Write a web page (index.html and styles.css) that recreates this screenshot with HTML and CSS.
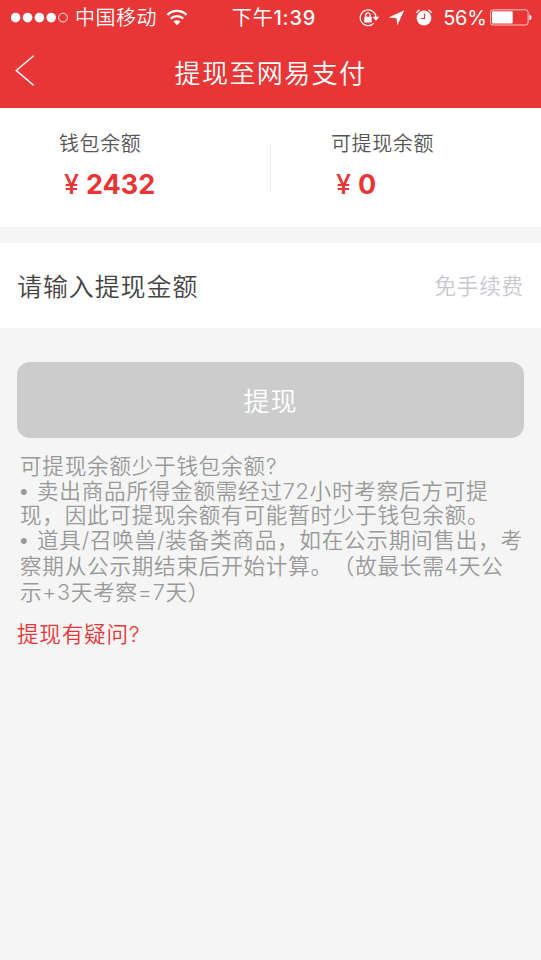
FILE: index.html
```html
<!DOCTYPE html>
<html lang="zh-CN">
<head>
<meta charset="utf-8">
<meta name="viewport" content="width=device-width, initial-scale=1">
<title>提现至网易支付</title>
<link rel="stylesheet" href="styles.css">
</head>
<body>
<header class="header">
  <div class="status">
    <div class="status-left">
      <svg class="signal" width="58" height="12" viewBox="0 0 58 12"><g fill="#fff"><circle cx="4.6" cy="5.6" r="4.8"/><circle cx="16.6" cy="5.6" r="4.8"/><circle cx="28.4" cy="5.6" r="4.8"/><circle cx="40.2" cy="5.6" r="4.8"/></g><circle cx="52" cy="5.6" r="4.4" fill="none" stroke="#fff" stroke-width=".9"/></svg>
      <span class="carrier">中国移动</span>
      <svg class="wifi" width="22" height="17" viewBox="0 0 22 17"><g fill="none" stroke="#fff" stroke-width="2.4"><path d="M1.4 5.8a13.6 13.6 0 0 1 19.2 0"/><path d="M4.8 9.7a8.8 8.8 0 0 1 12.4 0"/></g><path d="M11 16.2 7.5 12.6a5 5 0 0 1 7 0z" fill="#fff"/></svg>
    </div>
    <span class="time"><span class="period">下午</span>1:39</span>
    <div class="status-right">
      <svg class="lock" width="21" height="18" viewBox="0 0 21 18"><path d="M14.9 14.1A7.9 7.9 0 1 1 17 8.2" fill="none" stroke="#fff" stroke-width="1.2"/><path d="M13.7 7.8h6.6L17 11.8z" fill="#fff"/><rect x="5.3" y="7.8" width="7.4" height="5.6" rx=".5" fill="#fff"/><path d="M6.8 8V6a2.2 2.2 0 0 1 4.4 0v2" fill="none" stroke="#fff" stroke-width="1.2"/></svg>
      <svg class="arrow" width="17" height="16" viewBox="0 0 17 16"><path d="M16.3.3 9.2 15.6 8.5 8.3.7 7.6z" fill="#fff"/></svg>
      <svg class="alarm" width="18" height="18" viewBox="0 0 18 18"><circle cx="9" cy="9" r="7.4" fill="#fff"/><path d="M1.2 4A9.6 9.6 0 0 1 4.6.9M16.8 4A9.6 9.6 0 0 0 13.4.9" fill="none" stroke="#fff" stroke-width="1.3"/><path d="M9.6 4.4v5.1H5.6" fill="none" stroke="#e83536" stroke-width="1.1"/></svg>
      <span class="percent">56%</span>
      <svg class="battery" width="42" height="17" viewBox="0 0 42 17"><rect x=".5" y=".8" width="37.6" height="15.2" rx="2.4" fill="none" stroke="#fff" stroke-opacity=".72"/><rect x="2" y="2.3" width="20.7" height="12.2" rx="1" fill="#fff"/><path d="M39.4 5.5c1.4.5 2.1 1.6 2.1 2.9s-.7 2.4-2.1 2.9z" fill="#fff"/></svg>
    </div>
  </div>
  <div class="nav">
    <svg class="back" width="20" height="32" viewBox="0 0 20 32"><path d="M18.7.8 1.3 15.5 18.7 30.4" fill="none" stroke="#fff" stroke-width="1.5"/></svg>
    <h1 class="title">提现至网易支付</h1>
  </div>
</header>
<main>
  <section class="balances">
    <div class="balance wallet"><div class="label">钱包余额</div><div class="amount"><span class="yen">¥</span>2432</div></div>
    <div class="divider"></div>
    <div class="balance available"><div class="label">可提现余额</div><div class="amount"><span class="yen">¥</span>0</div></div>
  </section>
  <section class="entry"><span class="prompt">请输入提现金额</span><span class="fee">免手续费</span></section>
  <button class="submit" type="button">提现</button>
  <section class="notes">
    <div>可提现余额少于钱包余额?</div>
    <div><span class="bullet">•</span>卖出商品所得金额需经过72小时考察后方可提</div>
    <div>现，因此可提现余额有可能暂时少于钱包余额。</div>
    <div><span class="bullet">•</span>道具/召唤兽/装备类商品，如在公示期间售出，考</div>
    <div class="loose">察期从公示期结束后开始计算。（故最长需4天公</div>
    <div class="loose">示+3天考察=7天）</div>
  </section>
  <a class="help">提现有疑问?</a>
</main>
</body>
</html>
```
FILE: styles.css
```css
* { box-sizing: border-box; }
body {
  margin: 0;
  min-height: 960px;
  background: #f5f5f5;
  font-family: Inter, "Noto Sans CJK SC", sans-serif;
  font-weight: 350;
  white-space: nowrap;
  text-spacing-trim: space-all;
  overflow: hidden;
}
svg { display: block; flex: none; }
.header { height: 108px; background: #e83536; color: #fff; }
.status {
  display: grid;
  grid-template-columns: 1fr auto 1fr;
  align-items: center;
  height: 35px;
  padding: 0 9px 0 11px;
  font-size: 20px;
  line-height: 35px;
}
.status-left, .status-right { display: flex; align-items: center; }
.status-right { justify-content: flex-end; }
.carrier { margin-left: 6px; padding-top: 2px; line-height: 33px; letter-spacing: .5px; }
.wifi { margin-left: 9px; margin-bottom: 1px; }
.time { margin-left: 5px; padding-top: 2px; line-height: 33px; font-weight: 500; letter-spacing: .8px; }
.period { font-weight: 400; }
.lock { margin-right: -1px; }
.arrow { margin-left: 9px; }
.alarm { margin-left: 10px; }
.percent { margin-left: 10px; padding-top: 2px; line-height: 33px; font-weight: 400; letter-spacing: -.3px; }
.battery { margin-left: 3.5px; }
.nav {
  display: grid;
  grid-template-columns: 40px 1fr 40px;
  align-items: center;
  height: 73px;
  padding: 0 0 0 15px;
}
.back { margin-top: -1px; }
.title {
  margin: 4px 15px 0 0;
  text-align: center;
  font-size: 26px;
  font-weight: 350;
  letter-spacing: 1.4px;
  line-height: 38px;
}
.balances {
  display: grid;
  grid-template-columns: 270px 1px 270px;
  height: 119px;
  background: #fff;
}
.wallet { padding: 21px 0 0 59px; }
.available { padding: 21px 0 0 60px; }
.label { color: #555; font-size: 20px; line-height: 31px; letter-spacing: .6px; }
.amount {
  display: flex;
  padding: 8px 0 0 5px;
  color: #e83536;
  font-size: 27px;
  font-weight: 700;
  line-height: 34px;
}
.yen { width: 22px; font-weight: 500; }
.divider { height: 47px; margin-top: 36px; background: #ececec; }
.entry {
  display: flex;
  align-items: center;
  justify-content: space-between;
  height: 85px;
  margin-top: 16px;
  padding: 0 17px 2px;
  background: #fff;
}
.prompt { color: #444; font-size: 25px; letter-spacing: .9px; }
.fee { color: #c7c7cf; font-size: 21.6px; letter-spacing: .8px; }
.submit {
  display: block;
  width: 507px;
  height: 76px;
  margin: 34px 17px 0;
  padding: 0 0 2px;
  border: 0;
  border-radius: 13px;
  background: #ccc;
  color: #fff;
  font: inherit;
  font-size: 26px;
  letter-spacing: 1px;
}
.notes {
  padding: 16px 0 0 20px;
  color: #999;
  font-size: 21.6px;
  letter-spacing: .75px;
  line-height: 24.7px;
}
.notes .loose { line-height: 26px; }
.bullet { display: inline-block; width: 17px; font-family: "Liberation Sans", sans-serif; line-height: 20px; }
.help {
  display: block;
  margin: 13px 0 0 17px;
  color: #e83536;
  font-size: 21.6px;
  letter-spacing: .75px;
  line-height: 32px;
}
```
